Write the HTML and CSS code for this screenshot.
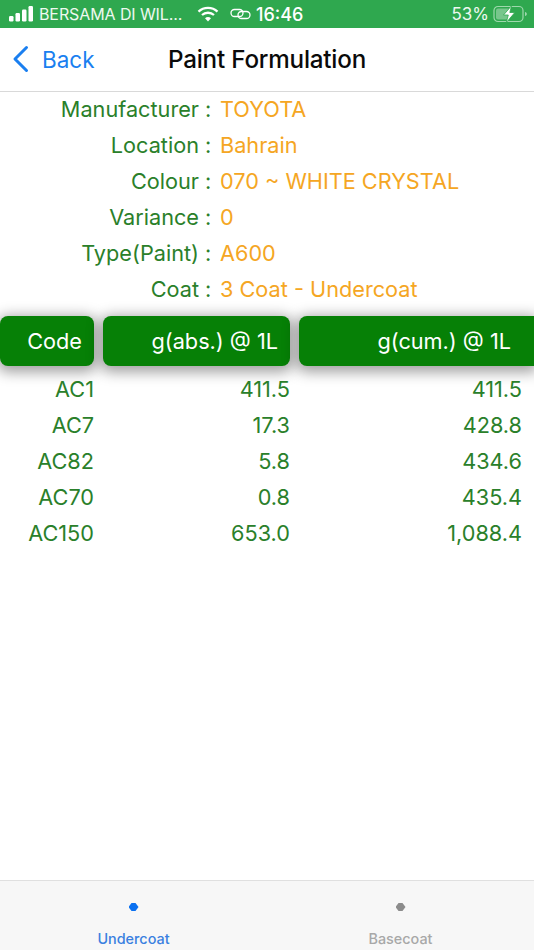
FILE: index.html
```html
<!DOCTYPE html>
<html lang="en">
<head>
<meta charset="utf-8">
<title>Paint Formulation</title>
<link rel="stylesheet" href="styles.css">
</head>
<body>
<div class="app">
  <div class="status">
    <div class="status-left">
      <svg class="signal" width="25" height="18" viewBox="0 0 25 18"><rect x="0" y="11" width="4.500" height="5.500" rx="1.200"/><rect x="6.500" y="8" width="4.500" height="8.500" rx="1.200"/><rect x="13" y="4.500" width="4.500" height="12" rx="1.200"/><rect x="19.500" y="1" width="4.500" height="15.500" rx="1.200"/></svg>
      <span class="carrier">BERSAMA DI WIL...</span>
      <svg class="wifi" width="22" height="16" viewBox="0 0 22 16"><path d="M1.500 5.600C6.800 .6 15.200 .6 20.500 5.600" fill="none" stroke="#fff" stroke-width="2.300"/><path d="M5 9C8.300 6 13.700 6 17 9" fill="none" stroke="#fff" stroke-width="2.300"/><path d="M8 12.200c1.800-1.500 4.200-1.500 6 0L11 15.500z" fill="#fff"/></svg>
      <svg class="link" width="21" height="12" viewBox="0 0 21 12"><rect x="1" y="1.500" width="12" height="7" rx="3.500" fill="none" stroke="#fff" stroke-width="1.300"/><rect x="8" y="3.500" width="12" height="7" rx="3.500" fill="none" stroke="#fff" stroke-width="1.300"/></svg>
    </div>
    <span class="time">16:46</span>
    <div class="status-right">
      <span class="pct">53%</span>
      <svg class="battery" width="35" height="18" viewBox="0 0 35 18"><rect x="1" y="1.500" width="29" height="15" rx="4" fill="none" stroke="#9ed8ac" stroke-width="1.200"/><rect x="3" y="3.500" width="14" height="11" rx="2" fill="#fff" opacity=".35"/><path d="M32 7v4c1.200-.3 1.800-1 1.800-2s-.6-1.700-1.800-2z" fill="#9ed8ac"/><path d="M18.500 0.800L10.500 10h4.800l-2 7.500 8.500-10h-5z" fill="#fff" stroke="#2fa84f" stroke-width=".8"/></svg>
    </div>
  </div>

  <header class="nav">
    <div class="back">
      <svg width="18" height="28" viewBox="0 0 18 28"><path d="M15.500 2.500L4 14 15.500 25.500" fill="none" stroke="#1a7ff0" stroke-width="3" stroke-linecap="round" stroke-linejoin="round"/></svg>
      <span>Back</span>
    </div>
    <h1 class="title">Paint Formulation</h1>
  </header>

  <main class="content">
    <dl class="info">
      <div class="info-row"><dt>Manufacturer</dt><dd class="colon">:</dd><dd class="value">TOYOTA</dd></div>
      <div class="info-row"><dt>Location</dt><dd class="colon">:</dd><dd class="value">Bahrain</dd></div>
      <div class="info-row"><dt>Colour</dt><dd class="colon">:</dd><dd class="value">070 ~ WHITE CRYSTAL</dd></div>
      <div class="info-row"><dt>Variance</dt><dd class="colon">:</dd><dd class="value">0</dd></div>
      <div class="info-row"><dt>Type(Paint)</dt><dd class="colon">:</dd><dd class="value">A600</dd></div>
      <div class="info-row"><dt>Coat</dt><dd class="colon">:</dd><dd class="value">3 Coat - Undercoat</dd></div>
    </dl>

    <div class="grid heads">
      <div class="head head-code">Code</div>
      <div class="head">g(abs.) @ 1L</div>
      <div class="head head-cum">g(cum.) @ 1L</div>
    </div>

    <div class="rows">
      <div class="grid row"><span>AC1</span><span>411.5</span><span class="cum">411.5</span></div>
      <div class="grid row"><span>AC7</span><span>17.3</span><span class="cum">428.8</span></div>
      <div class="grid row"><span>AC82</span><span>5.8</span><span class="cum">434.6</span></div>
      <div class="grid row"><span>AC70</span><span>0.8</span><span class="cum">435.4</span></div>
      <div class="grid row"><span>AC150</span><span>653.0</span><span class="cum">1,088.4</span></div>
    </div>
  </main>

  <nav class="tabs">
    <div class="tab active"><i class="dot"></i><span>Undercoat</span></div>
    <div class="tab"><i class="dot"></i><span>Basecoat</span></div>
  </nav>
</div>
</body>
</html>
```
FILE: styles.css
```css
* { box-sizing: border-box; margin: 0; padding: 0; }
html, body { width: 534px; height: 950px; overflow: hidden; background: #fff; }
body { font-family: "Inter", "Liberation Sans", sans-serif; }
.app { width: 534px; height: 950px; display: flex; flex-direction: column; }

.status { height: 28px; flex: none; background: #2fa84f; color: #fff; display: flex; align-items: center; padding: 0 6px 0 9px; position: relative; font-size: 16.500px; }
.status-left { display: flex; align-items: center; }
.signal { fill: #fff; margin-right: 5px; }
.carrier { font-size: 16px; letter-spacing: -0.1px; color: #eef8f0; white-space: nowrap; width: 158px; }
.wifi { margin-right: 11px; }
.time { position: absolute; left: 256px; top: 4px; font-size: 18px; font-weight: 500; }
.status-right { margin-left: auto; display: flex; align-items: center; gap: 4px; }
.pct { font-size: 17px; color: #eef8f0; }

.nav { height: 64px; flex: none; position: relative; display: flex; align-items: center; justify-content: center; border-bottom: 1px solid #d9d9d9; }
.back { position: absolute; left: 11px; top: 17px; display: flex; align-items: center; gap: 13px; color: #1a7ff0; font-size: 22.500px; }
.title { font-size: 24.200px; font-weight: 500; color: #0a0a0a; letter-spacing: -0.2px; }

.content { flex: 1; min-height: 0; }
.info-row { height: 36px; display: grid; grid-template-columns: 199px 21px 1fr; align-items: center; font-size: 21.700px; position: relative; top: -1px; }
.info-row dt { text-align: right; color: #2a802a; }
.colon { color: #2a802a; padding-left: 6px; }
.value { color: #f5a623; }

.grid { display: grid; grid-template-columns: 94px 187px 235px; column-gap: 9px; }
.heads { margin-top: 8px; height: 50px; }
.head { background: #068006; color: #fff; border-radius: 8px; font-size: 21.700px; display: flex; align-items: center; justify-content: flex-end; padding-right: 12px; box-shadow: 0 3px 14px 3px rgba(0, 0, 0, .38); }
.head-cum { padding-right: 23px; border-radius: 8px 0 0 8px; }

.rows { padding-top: 5px; }
.row { height: 36px; align-items: center; text-align: right; color: #2a802a; font-size: 21.700px; }
.cum { padding-right: 12px; }

.tabs { height: 70px; flex: none; background: #f7f7f7; border-top: 1px solid #e0e0e0; display: grid; grid-template-columns: 1fr 1fr; }
.tab { display: flex; flex-direction: column; align-items: center; color: #a8a8a8; font-size: 14.400px; font-weight: 500; padding-top: 22px; }
.tab .dot { width: 10px; height: 8px; background: #8c8c8c; clip-path: polygon(30% 0, 70% 0, 100% 50%, 70% 100%, 30% 100%, 0 50%); margin-bottom: 19px; }
.tab.active { color: #3a80e0; }
.tab.active .dot { background: #0a70f0; }
```
